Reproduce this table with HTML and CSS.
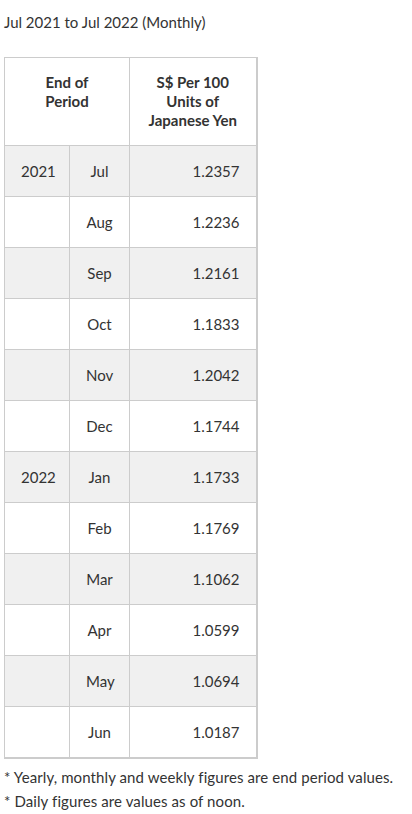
FILE: index.html
```html
<!DOCTYPE html>
<html lang="en">
<head>
<meta charset="utf-8">
<title>Exchange Rates</title>
<link rel="stylesheet" href="styles.css">
</head>
<body>
<main class="page">
  <p class="range">Jul 2021 to Jul 2022 (Monthly)</p>
  <table class="rates">
    <colgroup>
      <col class="c-year">
      <col class="c-month">
      <col class="c-val">
    </colgroup>
    <thead>
      <tr>
        <th colspan="2">End of<br>Period</th>
        <th>S$ Per 100<br>Units of<br>Japanese Yen</th>
      </tr>
    </thead>
    <tbody>
      <tr><td class="ctr">2021</td><td class="ctr">Jul</td><td class="val">1.2357</td></tr>
      <tr><td class="ctr"></td><td class="ctr">Aug</td><td class="val">1.2236</td></tr>
      <tr><td class="ctr"></td><td class="ctr">Sep</td><td class="val">1.2161</td></tr>
      <tr><td class="ctr"></td><td class="ctr">Oct</td><td class="val">1.1833</td></tr>
      <tr><td class="ctr"></td><td class="ctr">Nov</td><td class="val">1.2042</td></tr>
      <tr><td class="ctr"></td><td class="ctr">Dec</td><td class="val">1.1744</td></tr>
      <tr><td class="ctr">2022</td><td class="ctr">Jan</td><td class="val">1.1733</td></tr>
      <tr><td class="ctr"></td><td class="ctr">Feb</td><td class="val">1.1769</td></tr>
      <tr><td class="ctr"></td><td class="ctr">Mar</td><td class="val">1.1062</td></tr>
      <tr><td class="ctr"></td><td class="ctr">Apr</td><td class="val">1.0599</td></tr>
      <tr><td class="ctr"></td><td class="ctr">May</td><td class="val">1.0694</td></tr>
      <tr><td class="ctr"></td><td class="ctr">Jun</td><td class="val">1.0187</td></tr>
    </tbody>
  </table>
  <div class="notes">
    <p>* Yearly, monthly and weekly figures are end period values.</p>
    <p>* Daily figures are values as of noon.</p>
  </div>
</main>
</body>
</html>
```
FILE: styles.css
```css
html, body {
  margin: 0;
  padding: 0;
  background: #ffffff;
}

body {
  font-family: "Lato", "Open Sans", "Liberation Sans", sans-serif;
  font-size: 15px;
  color: #333333;
}

.page {
  padding: 10px 4px;
}

.range {
  margin: 0 0 23px;
  line-height: 24px;
}

.rates {
  border-collapse: collapse;
  table-layout: fixed;
  width: 252px;
  border-right: 2px solid #cccccc;
  border-bottom: 2px solid #cccccc;
}

.c-year { width: 65px; }
.c-month { width: 60px; }
.c-val { width: 127px; }

.rates th,
.rates td {
  border: 1px solid #cccccc;
  padding: 15px 16px;
  line-height: 20px;
}

.rates th {
  font-weight: 700;
  text-align: center;
  line-height: 19px;
  vertical-align: top;
  padding: 15px 6px;
  background: #ffffff;
}

.rates tbody tr:nth-child(odd) td {
  background: #f0f0f0;
}

.ctr {
  text-align: center;
  padding-left: 0;
  padding-right: 0;
}

.val {
  text-align: right;
}

.notes {
  margin-top: 6px;
}

.notes p {
  margin: 0;
  line-height: 24px;
  letter-spacing: 0.1px;
}
```
